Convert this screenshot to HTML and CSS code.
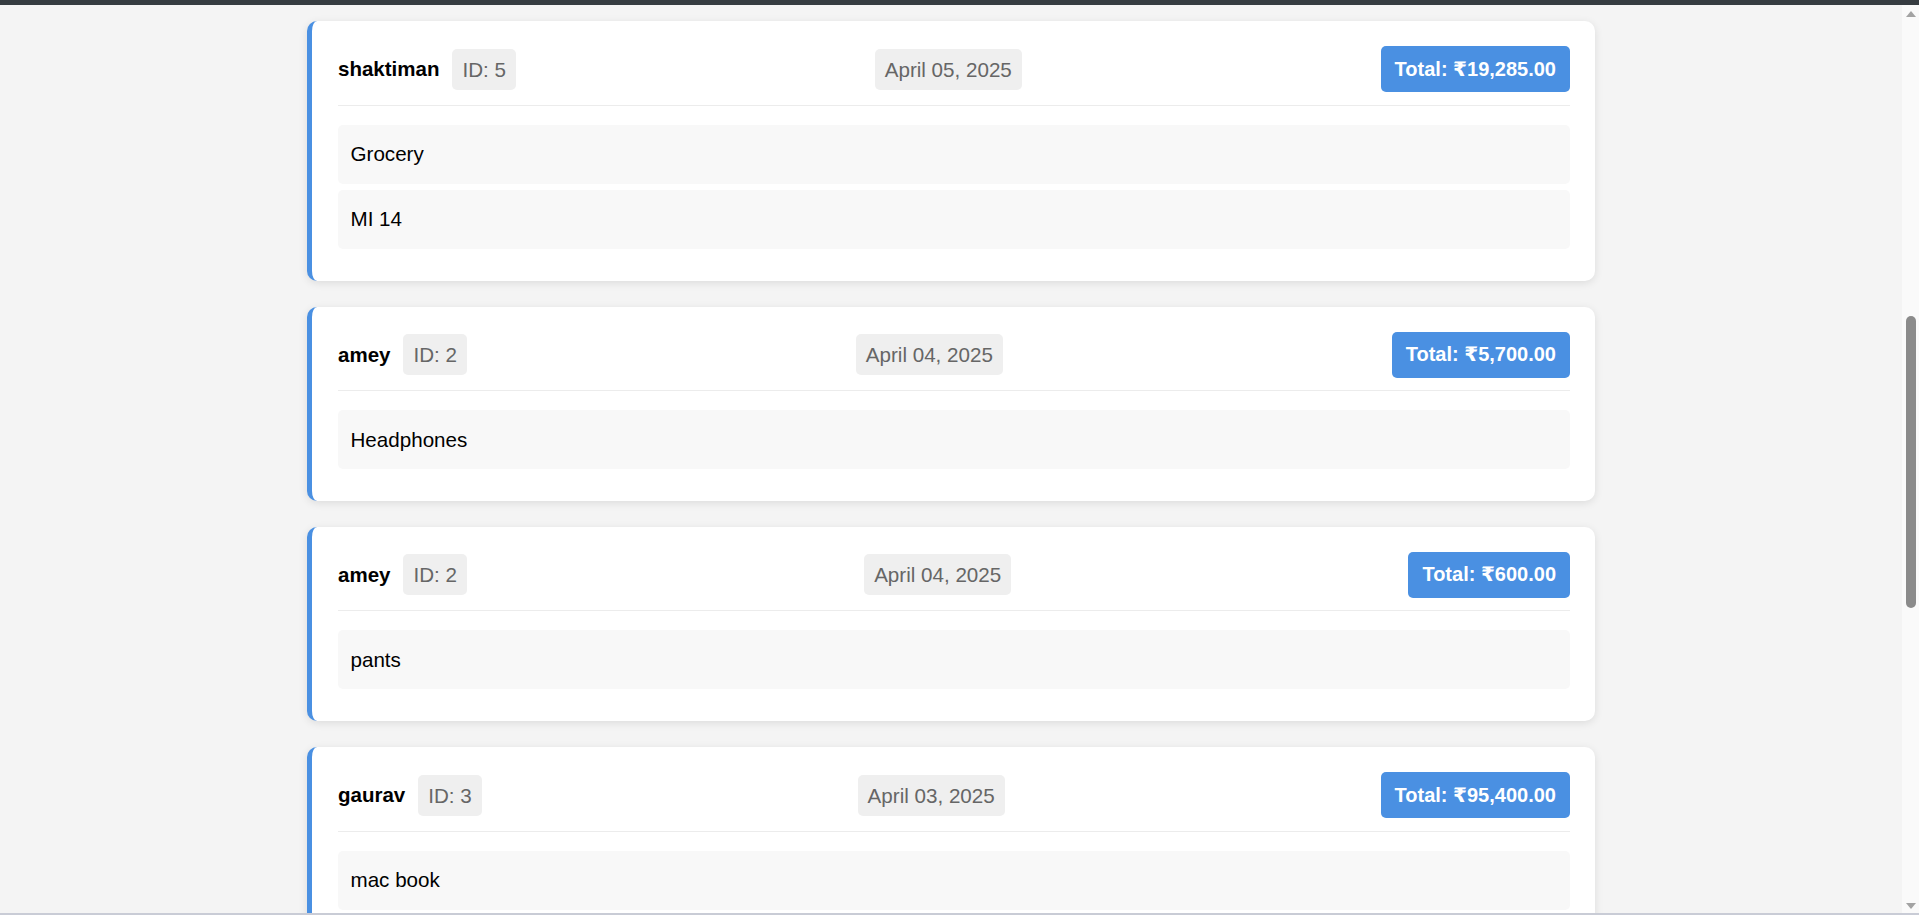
FILE: index.html
```html
<!DOCTYPE html>
<html lang="en">
<head>
<meta charset="utf-8">
<title>Orders</title>
<link rel="stylesheet" href="styles.css">
</head>
<body>
<div class="frame-top"></div>
<div class="window">
  <main class="main">
    <div class="container">
      <section class="card">
        <div class="card-header">
          <div class="user"><span class="name">shaktiman</span><span class="tag">ID: 5</span></div>
          <span class="tag date">April 05, 2025</span>
          <span class="total">Total: ₹19,285.00</span>
        </div>
        <div class="items">
          <div class="item">Grocery</div>
          <div class="item">MI 14</div>
        </div>
      </section>
      <section class="card">
        <div class="card-header">
          <div class="user"><span class="name">amey</span><span class="tag">ID: 2</span></div>
          <span class="tag date">April 04, 2025</span>
          <span class="total">Total: ₹5,700.00</span>
        </div>
        <div class="items">
          <div class="item">Headphones</div>
        </div>
      </section>
      <section class="card">
        <div class="card-header">
          <div class="user"><span class="name">amey</span><span class="tag">ID: 2</span></div>
          <span class="tag date">April 04, 2025</span>
          <span class="total">Total: ₹600.00</span>
        </div>
        <div class="items">
          <div class="item">pants</div>
        </div>
      </section>
      <section class="card">
        <div class="card-header">
          <div class="user"><span class="name">gaurav</span><span class="tag">ID: 3</span></div>
          <span class="tag date">April 03, 2025</span>
          <span class="total">Total: ₹95,400.00</span>
        </div>
        <div class="items">
          <div class="item">mac book</div>
        </div>
      </section>
    </div>
  </main>
  <aside class="scrollbar">
    <span class="arrow-up"></span>
    <span class="thumb"></span>
    <span class="arrow-down"></span>
  </aside>
</div>
<div class="frame-bottom"></div>
</body>
</html>
```
FILE: styles.css
```css
html, body {
  margin: 0;
  padding: 0;
  height: 915px;
  overflow: hidden;
}
body {
  background: #f4f4f4;
  font-family: "Liberation Sans", Arial, "DejaVu Sans", sans-serif;
  font-size: 20.6px;
  color: #000;
}
.frame-top {
  height: 5px;
  background: #363c41;
}
.window {
  display: flex;
  height: 908px;
}
.main {
  flex: 1;
  overflow: hidden;
  padding-top: 16px;
}
.container {
  width: 1288px;
  margin: 0 auto;
}
.card {
  background: #fff;
  border-left: 5px solid #4a90e2;
  border-radius: 10px;
  padding: 25px 25px 25.5px 26px;
  margin-bottom: 26px;
  box-shadow: 0 2px 8px rgba(0, 0, 0, 0.1);
}
.card-header {
  display: flex;
  justify-content: space-between;
  align-items: center;
  padding-bottom: 12.5px;
  border-bottom: 1px solid #ececec;
  margin-bottom: 19px;
}
.user {
  display: flex;
  align-items: center;
}
.name {
  font-weight: bold;
  font-size: 20.5px;
}
.tag {
  background: #efefef;
  color: #666;
  padding: 9px 10px;
  border-radius: 5px;
  line-height: 23px;
}
.user .tag {
  margin-left: 13px;
}
.total {
  background: #4a90e2;
  color: #fff;
  font-weight: bold;
  font-size: 20px;
  padding: 11.5px 14px;
  border-radius: 5px;
  line-height: 23px;
}
.item {
  background: #f8f8f8;
  border-radius: 5px;
  padding: 17.5px 12.5px 18.5px;
  line-height: 23px;
  margin-bottom: 6.25px;
}
.scrollbar {
  width: 17px;
  background: #fafafa;
  display: flex;
  flex-direction: column;
  align-items: center;
}
.arrow-up {
  margin-top: 6px;
  width: 0;
  height: 0;
  border-left: 5px solid transparent;
  border-right: 5px solid transparent;
  border-bottom: 6px solid #a3a3a3;
}
.thumb {
  margin-top: 299px;
  width: 10px;
  height: 292px;
  border-radius: 5px;
  background: #8b8b8b;
}
.arrow-down {
  margin-top: auto;
  margin-bottom: 4px;
  width: 0;
  height: 0;
  border-left: 5px solid transparent;
  border-right: 5px solid transparent;
  border-top: 6px solid #a3a3a3;
}
.frame-bottom {
  height: 2px;
  background: #c9ccd6;
}
```
